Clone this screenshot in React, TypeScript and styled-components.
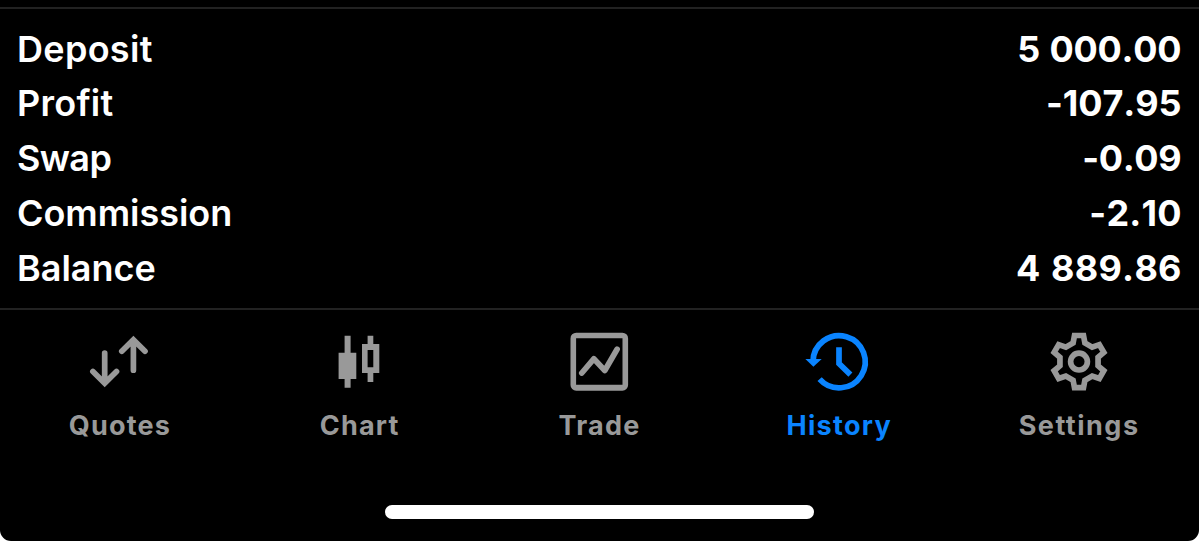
import React from 'react';
import styled, { createGlobalStyle } from 'styled-components';

const GlobalStyle = createGlobalStyle`
  body { margin: 0; background: #fff; }
  * { box-sizing: border-box; }
`;

const Screen = styled.div`
  display: flex;
  flex-direction: column;
  width: 1199px;
  height: 541px;
  padding-top: 7px;
  overflow: hidden;
  background: #000;
  border-radius: 0 0 11px 11px;
  font-family: Inter, 'Liberation Sans', sans-serif;
`;

const Summary = styled.dl`
  display: flex;
  flex-direction: column;
  height: 303px;
  margin: 0;
  padding: 12.7px 17px 0 17px;
  border-top: 2px solid #222;
  border-bottom: 2px solid #222;
`;

const Row = styled.div`
  display: flex;
  justify-content: space-between;
  height: 54.8px;
  line-height: 54.8px;
  color: #fff;
  font-size: 36px;
`;

const Label = styled.dt<{ $spacing: number }>`
  font-weight: 600;
  letter-spacing: ${(p) => p.$spacing}px;
`;

const Value = styled.dd<{ $spacing: number }>`
  margin: 0;
  font-weight: 680;
  font-feature-settings: 'calt' 0, 'kern' 0;
  word-spacing: 1.5px;
  letter-spacing: ${(p) => p.$spacing}px;
  margin-right: ${(p) => 0.5 - p.$spacing}px;
`;

const TabBar = styled.nav`
  display: grid;
  grid-template-columns: repeat(5, 1fr);
  height: 195px;
  padding-top: 19px;
`;

const Tab = styled.a<{ $active?: boolean }>`
  display: flex;
  flex-direction: column;
  align-items: center;
  gap: 17px;
  color: ${(p) => (p.$active ? '#0a84ff' : '#999')};
`;

const TabLabel = styled.span<{ $spacing: number }>`
  font-size: 27px;
  font-weight: 650;
  line-height: 32px;
  letter-spacing: ${(p) => p.$spacing}px;
`;

const Glyph = styled.svg`
  display: block;
  width: 64px;
  height: 64px;
  overflow: visible;
`;

const HomeIndicator = styled.div`
  width: 429px;
  height: 14px;
  margin: 0 auto;
  border-radius: 7px;
  background: #fff;
`;

const stroke = { fill: 'none', stroke: 'currentColor', strokeWidth: 5.7 };

const QuotesIcon = () => (
  <Glyph viewBox="0 0 64 64">
    <g {...stroke} strokeLinecap="round">
      <path d="M16.7 24V53M4.9 42.5L16.7 54.3L28.5 42.5" />
      <path d="M45.4 41.2V12M33.8 22.3L45.4 10.7L57 22.3" />
    </g>
  </Glyph>
);

const ChartIcon = () => (
  <Glyph viewBox="0 0 64 64">
    <path
      fill="currentColor"
      fillRule="evenodd"
      d="M16.6 6.7h6v17h5.7V50h-5.7v8.7h-6V50h-6V23.7h6zM39.6 6.7h5.7V15h6v29h-6v9h-5.7v-9H34V15h5.6zM39.6 21v17.3h5.7V21z"
    />
  </Glyph>
);

const TradeIcon = () => (
  <Glyph viewBox="0 0 64 64">
    <path
      fill="currentColor"
      fillRule="evenodd"
      d="M9.2 3.7h46.2a5.7 5.7 0 0 1 5.7 5.7V56a5.7 5.7 0 0 1-5.7 5.7H9.2A5.7 5.7 0 0 1 3.5 56V9.4a5.7 5.7 0 0 1 5.7-5.7zM9.1 9.3v46.5h46.4V9.3z"
    />
    <path {...stroke} strokeLinecap="round" strokeLinejoin="round" d="M14.8 44L26.8 29.8L37.8 41.5L50.1 20.3" />
  </Glyph>
);

const HistoryIcon = () => (
  <Glyph viewBox="0 0 64 64">
    <path {...stroke} d="M6 32.7A26.1 26.1 0 1 1 12.6 50.1" />
    <path fill="currentColor" d="M-1.6 30H14.7L6.4 37.7z" />
    <path {...stroke} d="M32 18.3V34.6L43.4 45.6" />
  </Glyph>
);

const gearPoints = [0, 60, 120, 180, 240, 300]
  .flatMap((deg) => {
    const a = (deg * Math.PI) / 180;
    return [[-5.9, -18.6], [-4.5, -26.1], [4.5, -26.1], [5.9, -18.6]].map(
      ([x, y]) =>
        `${(x * Math.cos(a) - y * Math.sin(a)).toFixed(2)},${(x * Math.sin(a) + y * Math.cos(a)).toFixed(2)}`,
    );
  })
  .join(' ');

const SettingsIcon = () => (
  <Glyph viewBox="0 0 64 64">
    <g {...stroke} transform="translate(32 32.6)">
      <polygon points={gearPoints} />
      <circle r="8.4" />
    </g>
  </Glyph>
);

const rows = [
  { label: 'Deposit', value: '5 000.00', ls: 0.3, vs: -0.3 },
  { label: 'Profit', value: '-107.95', ls: 0.25, vs: -0.1 },
  { label: 'Swap', value: '-0.09', ls: -0.6, vs: -0.4 },
  { label: 'Commission', value: '-2.10', ls: -0.05, vs: 0.2 },
  { label: 'Balance', value: '4 889.86', ls: 0, vs: 0.3 },
];

const tabs = [
  { label: 'Quotes', Icon: QuotesIcon, ls: 1.2 },
  { label: 'Chart', Icon: ChartIcon, ls: 1.2 },
  { label: 'Trade', Icon: TradeIcon, ls: 1.2 },
  { label: 'History', Icon: HistoryIcon, ls: 1.3, active: true },
  { label: 'Settings', Icon: SettingsIcon, ls: 1.5 },
];

export default function App() {
  return (
    <>
      <GlobalStyle />
      <Screen>
        <Summary>
          {rows.map((r) => (
            <Row key={r.label}>
              <Label $spacing={r.ls}>{r.label}</Label>
              <Value $spacing={r.vs}>{r.value}</Value>
            </Row>
          ))}
        </Summary>
        <TabBar>
          {tabs.map(({ label, Icon, ls, active }) => (
            <Tab key={label} $active={active}>
              <Icon />
              <TabLabel $spacing={ls}>{label}</TabLabel>
            </Tab>
          ))}
        </TabBar>
        <HomeIndicator />
      </Screen>
    </>
  );
}
